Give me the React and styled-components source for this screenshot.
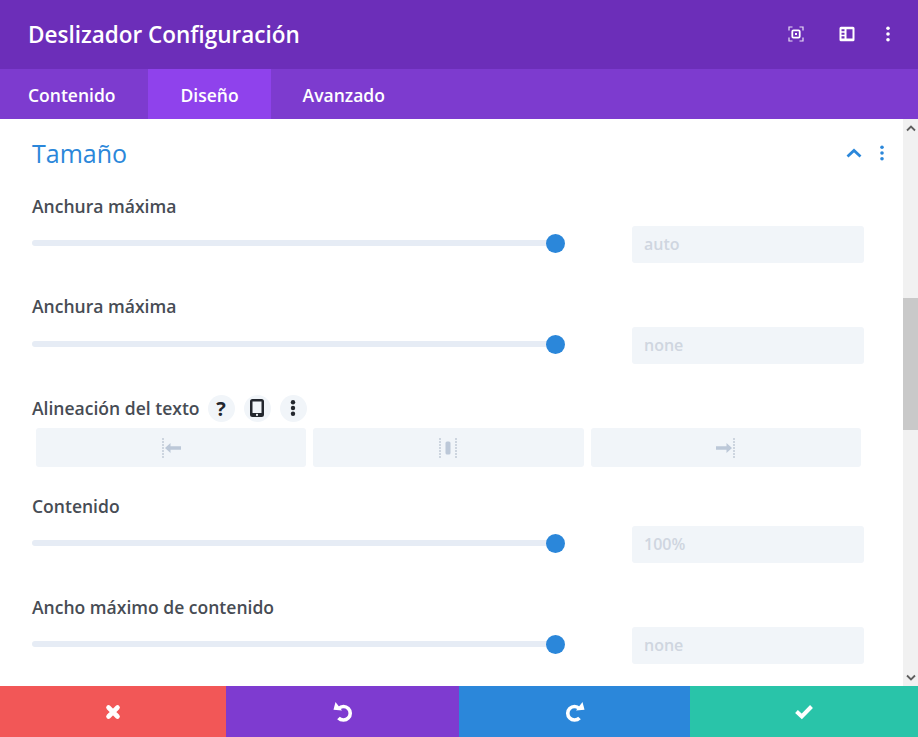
import React from "react";
import styled, { createGlobalStyle } from "styled-components";

const GlobalStyle = createGlobalStyle`
  html, body {
    margin: 0;
    padding: 0;
    background: #fff;
    font-family: "Open Sans", "Liberation Sans", sans-serif;
  }
  * { box-sizing: border-box; }
`;

const Modal = styled.div`
  width: 918px;
  height: 737px;
  display: flex;
  flex-direction: column;
  overflow: hidden;
`;

const Header = styled.div`
  height: 69px;
  flex: none;
  display: flex;
  align-items: center;
  justify-content: space-between;
  padding: 0 22px 1px 28px;
  background: #6c2eb9;
`;

const Title = styled.h1`
  margin: 0;
  font-size: 22.5px;
  font-weight: 600;
  color: #fff;
`;

const HeaderIcons = styled.div`
  display: flex;
  align-items: center;
  gap: 25px;
  color: #fff;
  svg:first-child {
    margin-right: 10px;
  }
`;

const Tabs = styled.div`
  height: 50px;
  flex: none;
  display: flex;
  background: #7d3bcf;
`;

const Tab = styled.div`
  display: flex;
  align-items: center;
  padding: 1px 32px 0;
  font-size: 17.5px;
  font-weight: 600;
  color: #fff;
  background: ${(p) => (p.$active ? "#8f42ec" : "transparent")};
  &:first-child {
    padding-left: 28px;
    padding-right: 33px;
  }
`;

const Body = styled.div`
  flex: 1;
  min-height: 0;
  display: flex;
`;

const Content = styled.div`
  flex: 1;
  padding: 0 39px 0 32px;
`;

const SectionHead = styled.div`
  height: 77px;
  display: flex;
  align-items: center;
  justify-content: space-between;
  padding-bottom: 9px;
  margin-right: -26px;
`;

const SectionTitle = styled.h2`
  margin: 0;
  font-size: 25px;
  font-weight: 400;
  color: #2b87da;
`;

const SectionIcons = styled.div`
  display: flex;
  align-items: center;
  gap: 12px;
  color: #2b87da;
`;

const Field = styled.div`
  height: ${(p) => p.$height || 100}px;
`;

const Label = styled.div`
  display: flex;
  align-items: center;
  height: 20px;
  font-size: 17.55px;
  font-weight: 600;
  color: #474c54;
`;

const SliderRow = styled.div`
  display: flex;
  align-items: center;
  justify-content: space-between;
  margin-top: ${(p) => p.$top || 8}px;
`;

const Track = styled.div`
  width: 524px;
  height: 6px;
  margin-bottom: 1px;
  border-radius: 3px;
  background: #e6ecf5;
  position: relative;
`;

const Thumb = styled.span`
  position: absolute;
  right: -9px;
  top: -6.5px;
  width: 19px;
  height: 19px;
  border-radius: 50%;
  background: #2b87da;
`;

const Input = styled.div`
  width: 232px;
  height: 37px;
  margin-top: 2px;
  display: flex;
  align-items: center;
  padding: 0 0 2px 12px;
  border-radius: 3px;
  background: #f1f5f9;
  font-size: 16px;
  font-weight: 600;
  color: #cfd6e0;
`;

const HelpIcons = styled.div`
  display: flex;
  gap: 9px;
  margin-left: 8px;
`;

const HelpIcon = styled.span`
  width: 27px;
  height: 27px;
  display: flex;
  align-items: center;
  justify-content: center;
  border-radius: 50%;
  background: #f1f5f9;
  color: #23272e;
  font-size: 20px;
  font-weight: 700;
`;

const AlignGroup = styled.div`
  display: flex;
  gap: 7px;
  margin: 10px 3px 0 4px;
`;

const AlignButton = styled.div`
  flex: 1;
  height: 39px;
  display: flex;
  align-items: center;
  justify-content: center;
  border-radius: 3px;
  background: #f1f5f9;
`;

const Scrollbar = styled.div`
  width: 15px;
  flex: none;
  display: flex;
  flex-direction: column;
  background: #f1f1f1;
`;

const ScrollArrow = styled.div`
  height: 18px;
  flex: none;
  display: flex;
  align-items: center;
  justify-content: center;
  color: #5f5f5f;
`;

const ScrollThumb = styled.div`
  height: 132px;
  margin-top: 161px;
  flex: none;
  background: #c9c9c9;
`;

const ScrollSpace = styled.div`
  flex: 1;
`;

const Footer = styled.div`
  height: 51px;
  flex: none;
  display: flex;
`;

const FooterButton = styled.div`
  width: ${(p) => p.$width}px;
  display: flex;
  align-items: center;
  justify-content: center;
  background: ${(p) => p.$color};
  color: #fff;
`;

const DotsIcon = ({ size = 16, r = 1.8 }) => (
  <svg width={size} height={size} viewBox="0 0 16 16" fill="currentColor">
    <circle cx="8" cy="2.3" r={r} />
    <circle cx="8" cy="8" r={r} />
    <circle cx="8" cy="13.7" r={r} />
  </svg>
);

const FocusIcon = () => (
  <svg width="16" height="16" viewBox="0 0 16 16" fill="none" stroke="currentColor">
    <path d="M1 4.500V1h3.500M11.500 1H15v3.500M15 11.500V15h-3.500M4.500 15H1v-3.500" strokeWidth="1.200" opacity="0.85" />
    <rect x="4.300" y="4.300" width="7.400" height="7.400" rx="1.200" strokeWidth="1.800" />
    <rect x="7" y="7" width="2" height="2" fill="currentColor" stroke="none" />
  </svg>
);

const SidebarIcon = () => (
  <svg width="16" height="16" viewBox="0 0 16 16" fill="currentColor">
    <path
      fillRule="evenodd"
      d="M2 .700h12a1.500 1.500 0 0 1 1.500 1.500v11.600a1.500 1.500 0 0 1-1.500 1.500H2a1.500 1.500 0 0 1-1.500-1.500V2.200A1.500 1.500 0 0 1 2 .700Zm.500 2.500v2h3v-2h-3Zm0 3.500v2h3v-2h-3Zm0 3.500v2.300h3v-2.300h-3Zm5-7v9.300h6V3.200h-6Z"
    />
  </svg>
);

const ChevronUp = () => (
  <svg width="16" height="10" viewBox="0 0 16 10" fill="none" stroke="currentColor" strokeWidth="2.800">
    <path d="M1.500 8.500L8 2.500l6.500 6" />
  </svg>
);

const PhoneIcon = () => (
  <svg width="14" height="18" viewBox="0 0 14 18" fill="currentColor">
    <path
      fillRule="evenodd"
      d="M2.500 0h9A2.500 2.500 0 0 1 14 2.500v13a2.500 2.500 0 0 1-2.500 2.500h-9A2.500 2.500 0 0 1 0 15.500v-13A2.500 2.500 0 0 1 2.500 0Zm0 2.500v11.500h9V2.500h-9ZM7 14.800a1.100 1.100 0 1 0 0 2.200 1.100 1.100 0 0 0 0-2.200Z"
    />
  </svg>
);

const dotLine = (x) =>
  [1, 4, 7, 10, 13, 16, 19].map((y) => <rect key={`${x}-${y}`} x={x} y={y - 1} width="2" height="2" fill="#cdd5df" />);

const AlignLeftIcon = () => (
  <svg width="20" height="20" viewBox="0 0 20 20">
    {dotLine(1)}
    <path d="M4 10l5.500-5v3.200H20v3.600H9.500V15L4 10Z" fill="#bcc8d8" />
  </svg>
);

const AlignCenterIcon = () => (
  <svg width="20" height="20" viewBox="0 0 20 20">
    {dotLine(1)}
    {dotLine(17)}
    <rect x="7.500" y="3.500" width="5" height="13" rx="1.500" fill="#bcc8d8" />
  </svg>
);

const AlignRightIcon = () => (
  <svg width="20" height="20" viewBox="0 0 20 20">
    {dotLine(17)}
    <path d="M16 10l-5.500-5v3.200H0v3.600h10.500V15L16 10Z" fill="#bcc8d8" />
  </svg>
);

const CloseIcon = () => (
  <svg width="16" height="16" viewBox="0 0 16 16" fill="none" stroke="currentColor" strokeWidth="4.600" strokeLinecap="round">
    <path d="M3.500 3.500l9 9M12.500 3.500l-9 9" />
  </svg>
);

const UndoIcon = () => (
  <svg width="20" height="20" viewBox="0 0 20 20" fill="none" stroke="currentColor" strokeWidth="3.600">
    <path d="M6 6.500C7 5.300 8.500 4.500 10.500 4.500a6.500 6.500 0 0 1 0 13.500c-1.800 0-3.800-.7-5-2" />
    <path d="M2.500 0L.500 7.800l8.500.7L2.500 0Z" fill="currentColor" stroke="none" />
  </svg>
);

const RedoIcon = () => (
  <svg width="20" height="20" viewBox="0 0 20 20" fill="none" stroke="currentColor" strokeWidth="3.600">
    <path d="M14 6.500C13 5.300 11.500 4.500 9.500 4.500a6.500 6.500 0 0 0 0 13.500c1.800 0 3.800-.7 5-2" />
    <path d="M17.500 0l2 7.800-8.500.7L17.500 0Z" fill="currentColor" stroke="none" />
  </svg>
);

const CheckIcon = () => (
  <svg width="18" height="16" viewBox="0 0 18 16" fill="none" stroke="currentColor" strokeWidth="4">
    <path d="M1.500 7.500L6.800 12.500L16.500 2.500" />
  </svg>
);

const ScrollChevron = ({ down }) => (
  <svg width="10" height="7" viewBox="0 0 10 7" fill="none" stroke="currentColor" strokeWidth="1.800">
    <path d={down ? "M1 1.500l4 4 4-4" : "M1 5.500l4-4 4 4"} />
  </svg>
);

function SliderField({ label, value, height, top }) {
  return (
    <Field $height={height}>
      <Label>{label}</Label>
      <SliderRow $top={top}>
        <Track>
          <Thumb />
        </Track>
        <Input>{value}</Input>
      </SliderRow>
    </Field>
  );
}

export default function App() {
  return (
    <Modal>
      <GlobalStyle />
      <Header>
        <Title>Deslizador Configuración</Title>
        <HeaderIcons>
          <FocusIcon />
          <SidebarIcon />
          <DotsIcon />
        </HeaderIcons>
      </Header>
      <Tabs>
        <Tab>Contenido</Tab>
        <Tab $active>Diseño</Tab>
        <Tab>Avanzado</Tab>
      </Tabs>
      <Body>
        <Content>
          <SectionHead>
            <SectionTitle>Tamaño</SectionTitle>
            <SectionIcons>
              <ChevronUp />
              <DotsIcon />
            </SectionIcons>
          </SectionHead>
          <SliderField label="Anchura máxima" value="auto" height={100} />
          <SliderField label="Anchura máxima" value="none" height={102} top={9} />
          <Field $height={98}>
            <Label>
              Alineación del texto
              <HelpIcons>
                <HelpIcon>?</HelpIcon>
                <HelpIcon>
                  <PhoneIcon />
                </HelpIcon>
                <HelpIcon>
                  <DotsIcon r={2.200} />
                </HelpIcon>
              </HelpIcons>
            </Label>
            <AlignGroup>
              <AlignButton>
                <AlignLeftIcon />
              </AlignButton>
              <AlignButton>
                <AlignCenterIcon />
              </AlignButton>
              <AlignButton>
                <AlignRightIcon />
              </AlignButton>
            </AlignGroup>
          </Field>
          <SliderField label="Contenido" value="100%" height={101} />
          <SliderField label="Ancho máximo de contenido" value="none" />
        </Content>
        <Scrollbar>
          <ScrollArrow>
            <ScrollChevron />
          </ScrollArrow>
          <ScrollThumb />
          <ScrollSpace />
          <ScrollArrow>
            <ScrollChevron down />
          </ScrollArrow>
        </Scrollbar>
      </Body>
      <Footer>
        <FooterButton $width={226} $color="#f25757">
          <CloseIcon />
        </FooterButton>
        <FooterButton $width={233} $color="#7e3bd0">
          <UndoIcon />
        </FooterButton>
        <FooterButton $width={231} $color="#2b87da">
          <RedoIcon />
        </FooterButton>
        <FooterButton $width={228} $color="#29c4a9">
          <CheckIcon />
        </FooterButton>
      </Footer>
    </Modal>
  );
}
